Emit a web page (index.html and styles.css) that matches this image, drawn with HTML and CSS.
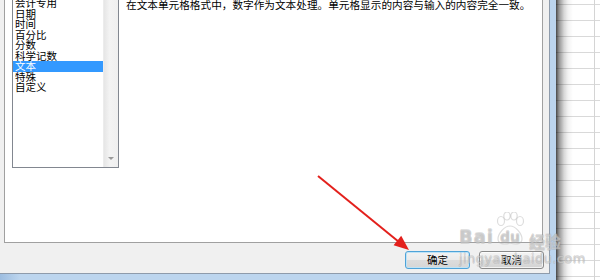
FILE: index.html
```html
<!DOCTYPE html>
<html lang="zh-CN">
<head>
<meta charset="utf-8">
<title>设置单元格格式</title>
<link rel="stylesheet" href="styles.css">
</head>
<body>
<div class="app">
  <div class="win">
    <div class="client">
      <div class="panel">
        <div class="listbox">
          <ul class="items">
            <li>会计专用</li>
            <li>日期</li>
            <li>时间</li>
            <li>百分比</li>
            <li>分数</li>
            <li>科学记数</li>
            <li class="sel">文本</li>
            <li>特殊</li>
            <li>自定义</li>
          </ul>
          <div class="vscroll"><span class="arrow-down"></span></div>
        </div>
        <p class="desc">在文本单元格格式中，数字作为文本处理。单元格显示的内容与输入的内容完全一致。</p>
      </div>
      <div class="buttons">
        <button class="btn btn-default">确定</button>
        <button class="btn">取消</button>
      </div>
    </div>
  </div>
  <div class="sheet"></div>

  <svg class="annot" width="600" height="280" viewBox="0 0 600 280">
    <line x1="318" y1="176" x2="399" y2="242" stroke="#e3201c" stroke-width="2"/>
    <polygon points="409,250 393.6,245.2 401.2,235.8" fill="#e3201c"/>
  </svg>

  <div class="watermark">
    <svg class="paw" width="30" height="34" viewBox="0 0 30 34">
      <g fill="none" stroke="rgba(170,170,170,0.4)" stroke-width="1.2">
        <ellipse cx="6" cy="9" rx="3.5" ry="4.5"/>
        <ellipse cx="12" cy="4" rx="3.2" ry="4"/>
        <ellipse cx="19" cy="4" rx="3.2" ry="4"/>
        <ellipse cx="25" cy="9" rx="3.5" ry="4.5"/>
        <path d="M15 14 C9 14 3 22 3 27 C3 32 9 33 15 31 C21 33 27 32 27 27 C27 22 21 14 15 14 Z"/>
      </g>
    </svg>
    <span class="wm-bai">Bai</span>
    <span class="wm-du">du</span>
    <span class="wm-jy">经验</span>
    <span class="wm-url">jingyan.baidu.com</span>
  </div>
</div>
</body>
</html>
```

FILE: styles.css
```css
* { box-sizing: border-box; }

html, body {
  margin: 0;
  padding: 0;
  width: 600px;
  height: 280px;
  overflow: hidden;
  background: #ffffff;
  font-family: "Noto Sans CJK SC", "Liberation Sans", sans-serif;
}

.app {
  position: relative;
  display: flex;
  width: 600px;
  height: 280px;
}

.win {
  width: 556px;
  height: 280px;
  padding: 0 6px 6px 0;
  background: linear-gradient(to right, #9dbde0 0, #bcd5ee 20px, #bcd5ee 100%);
  flex: none;
}

.client {
  width: 550px;
  height: 274px;
  background: #f0f0f0;
  border-right: 1px solid #8e9bab;
  border-bottom: 1px solid #8e9bab;
  display: flex;
  flex-direction: column;
}

.panel {
  margin: -1px 0 0 4px;
  width: 539px;
  height: 244px;
  background: #ffffff;
  border: 1px solid #a0a0a0;
  display: flex;
  align-items: flex-start;
  padding-left: 7px;
}

.listbox {
  margin-top: -3px;
  width: 107px;
  height: 171px;
  border: 1px solid #828790;
  display: flex;
  flex: none;
}

.items {
  list-style: none;
  margin: 0;
  padding: 0;
  flex: 1;
}

.items li {
  height: 10.5px;
  line-height: 10.5px;
  font-size: 10.5px;
  padding-left: 2px;
  color: #000;
  white-space: nowrap;
}

.items li.sel {
  background: #3399ff;
  color: #ffffff;
}

.vscroll {
  width: 15px;
  background: linear-gradient(to right, #e6e6e6, #f3f3f3 40%, #efefef);
  border-left: 1px solid #ececec;
  display: flex;
  align-items: flex-end;
  justify-content: center;
  padding-bottom: 7px;
}

.arrow-down {
  width: 0;
  height: 0;
  border-left: 3px solid transparent;
  border-right: 3px solid transparent;
  border-top: 3px solid #9a9a9a;
}

.desc {
  margin: -1px 0 0 7px;
  font-size: 10.65px;
  line-height: 12px;
  color: #000;
  white-space: nowrap;
}

.buttons {
  margin-top: 8px;
  display: flex;
  justify-content: flex-end;
  gap: 9px;
  padding-right: 5px;
}

.btn {
  width: 65px;
  height: 18px;
  padding: 0;
  font-family: "Noto Sans CJK SC", "Liberation Sans", sans-serif;
  font-size: 10.5px;
  line-height: 16px;
  color: #000;
  border: 1px solid #8a8a8a;
  border-radius: 3px;
  background: linear-gradient(to bottom, #f4f4f4 0, #ececec 48%, #dedede 52%, #d2d2d2 100%);
  box-shadow: inset 0 0 0 1px rgba(255,255,255,0.7);
}

.btn-default {
  border-color: #4fa3d8;
  box-shadow: inset 0 0 0 1px #bfe3f6;
  background: linear-gradient(to bottom, #f2f2f2 0, #ebebeb 48%, #dcdcdc 52%, #d6d6d6 100%);
}

.sheet {
  flex: 1;
  height: 280px;
  background:
    linear-gradient(to right, rgba(0,0,0,0.72) 0, rgba(0,0,0,0.42) 3px, rgba(0,0,0,0.16) 8px, rgba(0,0,0,0.05) 12px, rgba(0,0,0,0) 17px),
    linear-gradient(to right, transparent 38px, #d4d4d4 38px, #d4d4d4 39px, transparent 39px),
    repeating-linear-gradient(to bottom, #ffffff 0, #ffffff 4px, #d9d9d9 4px, #d9d9d9 5px, #ffffff 5px, #ffffff 16px);
}

.annot {
  position: absolute;
  left: 0;
  top: 0;
  pointer-events: none;
}

.watermark {
  position: absolute;
  left: 0;
  top: 0;
  width: 600px;
  height: 280px;
  pointer-events: none;
  font-family: "DejaVu Sans", "Liberation Sans", sans-serif;
}

.watermark span {
  position: absolute;
  color: rgba(255,255,255,0.3);
  text-shadow:
    -0.6px 0 0 rgba(160,160,160,0.32),
    0.6px 0 0 rgba(160,160,160,0.32),
    0 -0.6px 0 rgba(160,160,160,0.32),
    0 0.6px 0 rgba(160,160,160,0.32);
}

.paw {
  position: absolute;
  left: 495px;
  top: 212px;
}

.wm-bai {
  left: 459px;
  top: 226px;
  font-size: 18px;
  font-weight: bold;
  letter-spacing: 1px;
}

.wm-du {
  left: 500px;
  top: 229px;
  font-size: 14px;
  font-weight: bold;
}

.wm-jy {
  left: 529px;
  top: 229px;
  font-size: 16px;
  font-weight: bold;
  font-family: "Noto Sans CJK SC", sans-serif;
}

.wm-url {
  left: 459px;
  top: 251px;
  font-size: 13px;
  letter-spacing: 0.4px;
}
```
